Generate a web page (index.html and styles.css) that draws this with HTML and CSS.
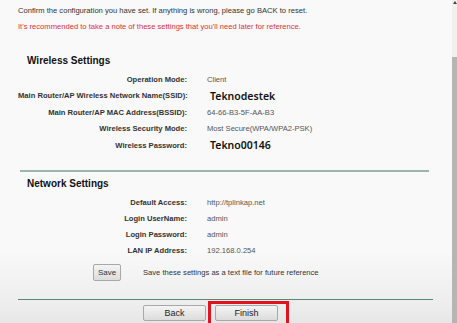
FILE: index.html
```html
<!DOCTYPE html>
<html lang="en">
<head>
    <meta charset="UTF-8">
    <title>Quick Setup - Summary</title>
    <link rel="stylesheet" href="styles.css">
</head>
<body>
<div class="page">
    <div class="content">
        <p class="note">Confirm the configuration you have set. If anything is wrong, please go BACK to reset.</p>
        <p class="note warn">It's recommended to take a note of these settings that you'll need later for reference.</p>

        <!-- Wireless -->
        <h3 class="section-title first">Wireless Settings</h3>
        <div class="rows">
            <div class="label">Operation Mode:</div>
            <div class="value">Client</div>
            <div class="label">Main Router/AP Wireless Network Name(SSID):</div>
            <div class="value big">Teknodestek</div>
            <div class="label">Main Router/AP MAC Address(BSSID):</div>
            <div class="value">64-66-B3-5F-AA-B3</div>
            <div class="label">Wireless Security Mode:</div>
            <div class="value">Most Secure(WPA/WPA2-PSK)</div>
            <div class="label">Wireless Password:</div>
            <div class="value big">Tekno00146</div>
        </div>

        <hr class="divider">

        <!-- Network -->
        <h3 class="section-title">Network Settings</h3>
        <div class="rows net">
            <div class="label">Default Access:</div>
            <div class="value">http://tplinkap.net</div>
            <div class="label">Login UserName:</div>
            <div class="value">admin</div>
            <div class="label">Login Password:</div>
            <div class="value">admin</div>
            <div class="label">LAN IP Address:</div>
            <div class="value">192.168.0.254</div>
        </div>

        <div class="save-row">
            <button class="btn save-btn">Save</button>
            <span>Save these settings as a text file for future reference</span>
        </div>

        <hr class="divider bottom">

        <div class="actions">
            <button class="btn wide">Back</button>
            <span class="highlight"><button class="btn wide">Finish</button></span>
        </div>
    </div>

    <div class="scrollbar">
        <div class="arrow"></div>
        <div class="thumb"></div>
    </div>
</div>
</body>
</html>
```

FILE: styles.css
```css
html, body {
    margin: 0;
    padding: 0;
}
body {
    font-family: "Liberation Sans", Arial, sans-serif;
    font-size: 7.6px;
    color: #222;
    background: #f8f8f8;
}
.page {
    display: flex;
    height: 323px;
    overflow: hidden;
    background: linear-gradient(#f9f9f9 0, #f9f9f9 250px, #ececec 310px, #e6e6e6 323px);
}
.content {
    flex: 1;
    padding-left: 18px;
    padding-right: 23px;
}
.note {
    margin: 0;
    padding-top: 6px;
    height: 10px;
    color: #333;
    white-space: nowrap;
}
.note.warn {
    color: #e0303a;
    padding-top: 6px;
}
.section-title {
    margin: 0;
    font-size: 10px;
    font-weight: bold;
    color: #111;
    padding-left: 9px;
    padding-top: 6px;
    height: 14px;
}
.section-title.first {
    padding-top: 23px;
}
.rows {
    display: grid;
    grid-template-columns: 169px 1fr;
    column-gap: 20px;
    grid-auto-rows: 16.5px;
    align-items: center;
    margin-top: 2px;
}
.rows.net {
    grid-auto-rows: 16px;
    margin-top: 3px;
}
.label {
    text-align: right;
    font-weight: bold;
    color: #333;
    white-space: nowrap;
}
.value {
    color: #555;
    white-space: nowrap;
}
.value.big {
    font-family: "Noto Sans", sans-serif;
    font-weight: 600;
    font-size: 10.5px;
    color: #111;
    padding-left: 3px;
}
.divider {
    border: 0;
    height: 2px;
    background: #9db5aa;
    margin: 16px 0 0 2px;
}
.divider.bottom {
    background: #5b8a72;
    height: 1px;
    margin: 18px -4px 0 0;
}
.save-row {
    display: flex;
    align-items: center;
    gap: 22px;
    margin-top: 5px;
    padding-left: 75px;
    color: #333;
    white-space: nowrap;
}
.btn {
    font-family: "Liberation Sans", Arial, sans-serif;
    font-size: 8px;
    color: #333;
    background: linear-gradient(#f4f4f4, #dcdcdc);
    border: 1px solid #a8a8a8;
    border-radius: 2px;
    padding: 0;
}
.save-btn {
    width: 28px;
    height: 17px;
}
.actions {
    display: flex;
    align-items: center;
    gap: 2px;
    padding-left: 125px;
    margin-top: 1px;
}
.btn.wide {
    width: 63px;
    height: 16px;
    font-size: 9px;
    color: #222;
}
.highlight {
    display: inline-block;
    border: 3px solid #e0141e;
    padding: 1px 8px 2px 4px;
}
.scrollbar {
    width: 5px;
    background: #f0f0f0;
    position: relative;
}
.arrow {
    width: 0;
    height: 0;
    border-left: 2px solid transparent;
    border-right: 2px solid transparent;
    border-bottom: 3px solid #444;
    margin: 1px 0 0 1px;
}
.thumb {
    position: absolute;
    top: 57px;
    bottom: 0;
    left: 0;
    right: 0;
    background: #b5b5b5;
}
```
